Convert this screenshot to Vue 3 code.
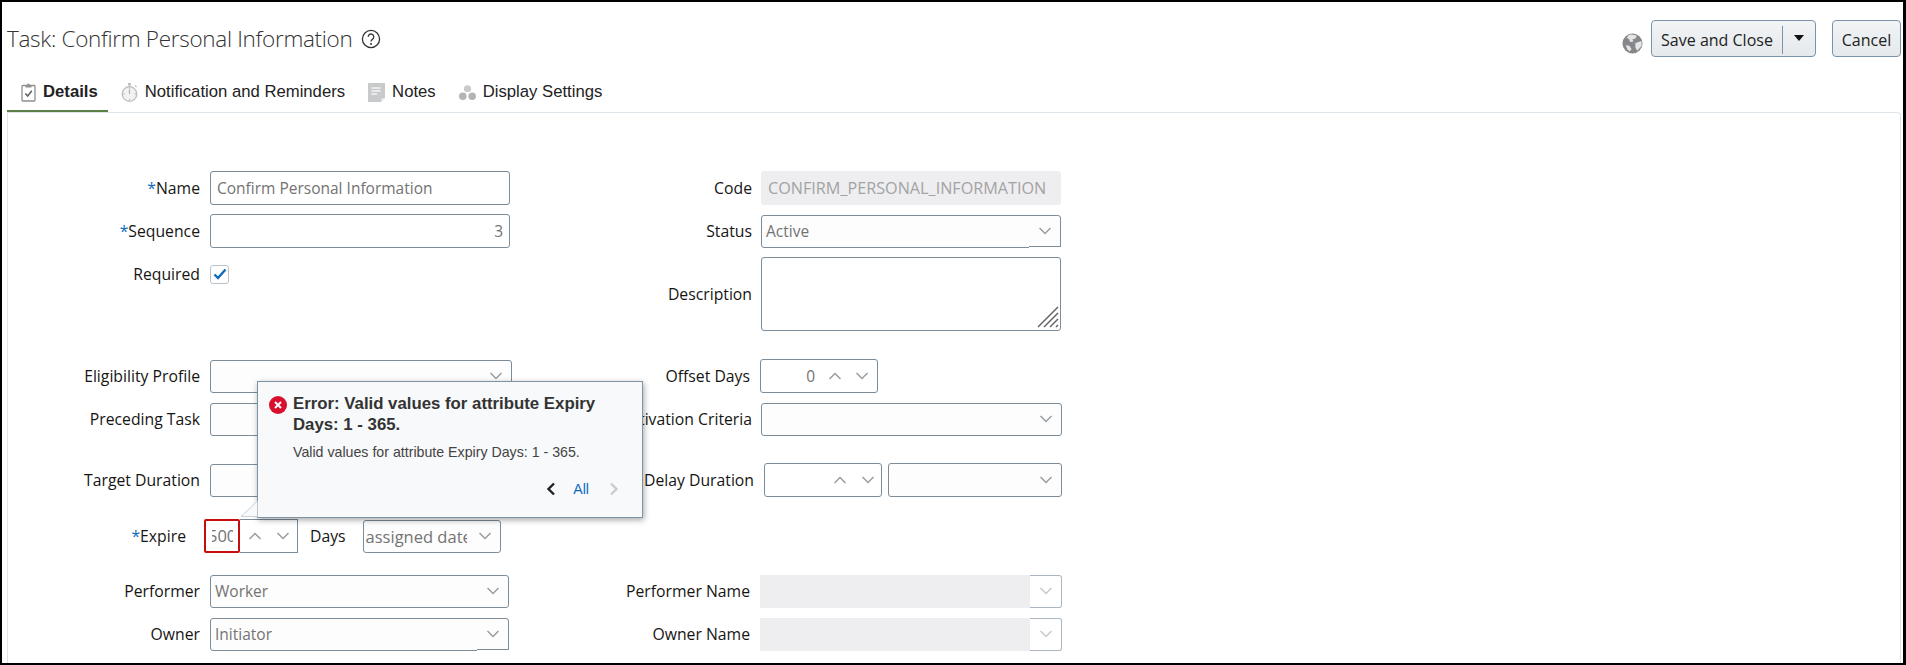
<script setup>
import { ref } from 'vue';

const taskName = ref('Confirm Personal Information');
const sequence = ref('3');
const code = ref('CONFIRM_PERSONAL_INFORMATION');
const required = ref(true);
const tabs = [
  { id: 'details', label: 'Details' },
  { id: 'notify', label: 'Notification and Reminders' },
  { id: 'notes', label: 'Notes' },
  { id: 'display', label: 'Display Settings' },
];
const currentTab = ref('details');
</script>

<template>
  <div class="frame">
    <svg class="defs" aria-hidden="true">
      <symbol id="chev-down" viewBox="0 0 14 8"><path d="M1.5 1 7 6.5 12.5 1" fill="none" stroke="currentColor" stroke-width="1.5" /></symbol>
      <symbol id="chev-up" viewBox="0 0 14 8"><path d="M1.5 7 7 1.5 12.5 7" fill="none" stroke="currentColor" stroke-width="1.5" /></symbol>
    </svg>

    <header class="head">
      <h1 class="title">Task: Confirm Personal Information</h1>
      <svg class="help" viewBox="0 0 20 20">
        <circle cx="10" cy="10" r="8.6" fill="none" stroke="#333" stroke-width="1.3" />
        <path d="M7.2 7.8a2.8 2.8 0 1 1 4.4 2.3c-1 .7-1.6 1.2-1.6 2.5" fill="none" stroke="#333" stroke-width="1.3" />
        <circle cx="10" cy="15" r="1" fill="#333" />
      </svg>
      <div class="actions">
        <svg class="globe" viewBox="0 0 22 22">
          <circle cx="11" cy="11" r="10.5" fill="#85878a" />
          <path d="M7 2 10 1.500 15.500 2.500 14 6 11 6.500 12 9 8.500 9.500 7.500 6.500 5 5Z" fill="#e4e5e5" />
          <path d="M14 10.500 20.500 8.500 20.500 13.500 16 18.500 14 15.500ZM4 12.500 8 13.500 10 17 8 19.500 5.500 17Z" fill="#e4e5e5" />
        </svg>
        <div class="btn split">
          <span class="split-main">Save and Close</span>
          <span class="split-arrow"><svg viewBox="0 0 10 6" width="10" height="6"><path d="M0 0h10L5 6z" fill="#111" /></svg></span>
        </div>
        <div class="btn cancel">Cancel</div>
      </div>
    </header>

    <nav class="tabs">
      <div
        v-for="tab in tabs"
        :key="tab.id"
        class="tab"
        :class="{ selected: currentTab === tab.id }"
        @click="currentTab = tab.id"
      >
        <svg v-if="tab.id === 'details'" class="tab-icon" viewBox="0 0 17 19">
          <rect x="2" y="2.500" width="13" height="15.500" rx="0.800" fill="#fff" stroke="#8f8f8f" stroke-width="1.300" />
          <path d="M5.500 4.500V2.500H7.300V0.700H9.700V2.500H11.500V4.500Z" fill="#8f8f8f" />
          <path d="M5.300 10.500 7.700 13 11.800 7.800" fill="none" stroke="#5f5f5f" stroke-width="1.500" />
        </svg>
        <svg v-else-if="tab.id === 'notify'" class="tab-icon" viewBox="0 0 17 19">
          <rect x="7" y="0" width="3" height="2.500" fill="#bdbdbd" />
          <path d="M14 2.500l1.500 1.500" stroke="#c4c4c4" stroke-width="1.300" />
          <circle cx="8.500" cy="11" r="7.300" fill="#f2f2f2" stroke="#bdbdbd" stroke-width="1.300" />
          <path d="M8.500 6.500V11" stroke="#b0b0b0" stroke-width="1.200" />
          <circle cx="8.500" cy="5" r="0.700" fill="#b0b0b0" />
          <circle cx="8.500" cy="16.800" r="0.700" fill="#b0b0b0" />
          <circle cx="3" cy="11" r="0.700" fill="#b0b0b0" />
          <circle cx="14" cy="11" r="0.700" fill="#b0b0b0" />
        </svg>
        <svg v-else-if="tab.id === 'notes'" class="tab-icon" viewBox="0 0 17 19">
          <path d="M0 0h17v15l-4 4H0z" fill="#c9cacb" />
          <path d="M13.500 19l3.500-3.500h-3.500z" fill="#f1f1f1" />
          <path d="M3.500 5h9M3.500 8h9M3.500 11h5.500" stroke="#f4f4f4" stroke-width="1.300" />
        </svg>
        <svg v-else class="tab-icon" viewBox="0 0 18 18">
          <circle cx="9" cy="5" r="3.800" fill="#c9cacb" />
          <circle cx="4" cy="13" r="4" fill="#b3b4b5" />
          <circle cx="14" cy="13" r="4" fill="#b3b4b5" />
        </svg>
        <span>{{ tab.label }}</span>
      </div>
    </nav>

    <main class="panel">
      <div class="form">
        <section class="col-left">
          <div class="row">
            <label class="lbl"><i>*</i>Name</label>
            <input v-model="taskName" class="field" type="text" />
          </div>
          <div class="row">
            <label class="lbl"><i>*</i>Sequence</label>
            <input v-model="sequence" class="field num" type="text" />
          </div>
          <div class="row">
            <label class="lbl">Required</label>
            <span class="check" :class="{ on: required }" @click="required = !required">
              <svg viewBox="0 0 14 12" width="14" height="12"><path d="M1.500 6.500 5 10l7.500-8.500" fill="none" stroke="#0f6cbd" stroke-width="2.400" /></svg>
            </span>
          </div>
          <div class="row mt68">
            <label class="lbl">Eligibility Profile</label>
            <div class="select wide"><span></span><svg class="chev"><use href="#chev-down" /></svg></div>
          </div>
          <div class="row">
            <label class="lbl">Preceding Task</label>
            <div class="select wide"><span></span><svg class="chev"><use href="#chev-down" /></svg></div>
          </div>
          <div class="row mt27">
            <label class="lbl">Target Duration</label>
            <div class="select wide"><span></span></div>
          </div>
          <div class="row mt22 expire">
            <label class="lbl"><i>*</i>Expire</label>
            <div class="spin">
              <div class="bad"><span>5000</span></div>
              <div class="spin-btns">
                <svg class="chev"><use href="#chev-up" /></svg>
                <svg class="chev"><use href="#chev-down" /></svg>
              </div>
            </div>
            <span class="days">Days</span>
            <div class="select date"><span>assigned date</span><svg class="chev"><use href="#chev-down" /></svg></div>
          </div>
          <div class="row mt21">
            <label class="lbl">Performer</label>
            <div class="select"><span>Worker</span><svg class="chev"><use href="#chev-down" /></svg></div>
          </div>
          <div class="row">
            <label class="lbl">Owner</label>
            <div class="select notch"><span>Initiator</span><svg class="chev"><use href="#chev-down" /></svg></div>
          </div>
        </section>

        <section class="col-right">
          <div class="row">
            <label class="lbl">Code</label>
            <input v-model="code" class="field off" type="text" disabled />
          </div>
          <div class="row">
            <label class="lbl">Status</label>
            <div class="select notch status"><span>Active</span><svg class="chev"><use href="#chev-down" /></svg></div>
          </div>
          <div class="row tall">
            <label class="lbl">Description</label>
            <div class="area">
              <svg class="grip" viewBox="0 0 22 22">
                <path d="M1 21 21 1M7 21 21 7M13 21l8-8M19 21l2-2" stroke="#666" stroke-width="1.500" fill="none" />
              </svg>
            </div>
          </div>
          <div class="row mt28 narrow">
            <label class="lbl">Offset Days</label>
            <div class="spin offset">
              <span class="spin-val">0</span>
              <div class="spin-btns">
                <svg class="chev"><use href="#chev-up" /></svg>
                <svg class="chev"><use href="#chev-down" /></svg>
              </div>
            </div>
          </div>
          <div class="row">
            <label class="lbl">Activation Criteria</label>
            <div class="select long"><span></span><svg class="chev"><use href="#chev-down" /></svg></div>
          </div>
          <div class="row mt27 delay">
            <label class="lbl">Delay Duration</label>
            <div class="spin delay-spin">
              <span class="spin-val"></span>
              <div class="spin-btns">
                <svg class="chev"><use href="#chev-up" /></svg>
                <svg class="chev"><use href="#chev-down" /></svg>
              </div>
            </div>
            <div class="select delay-unit"><span></span><svg class="chev"><use href="#chev-down" /></svg></div>
          </div>
          <div class="row mt77 narrow">
            <label class="lbl">Performer Name</label>
            <div class="lookup"><div class="lookup-val"></div><div class="lookup-btn"><svg class="chev faint"><use href="#chev-down" /></svg></div></div>
          </div>
          <div class="row narrow">
            <label class="lbl">Owner Name</label>
            <div class="lookup"><div class="lookup-val"></div><div class="lookup-btn"><svg class="chev faint"><use href="#chev-down" /></svg></div></div>
          </div>
        </section>
      </div>
    </main>

    <aside class="popup">
      <svg class="pointer" viewBox="0 0 18 18" width="18" height="18">
        <path d="M17.500 1 1 16.500H17.500" fill="#f8f9fa" stroke="#c8d1d8" stroke-width="1" />
      </svg>
      <div class="popup-head">
        <svg class="err" viewBox="0 0 18 18">
          <circle cx="9" cy="9" r="9" fill="#d8102e" />
          <path d="M6 6l6 6M12 6l-6 6" stroke="#fff" stroke-width="2" />
        </svg>
        <strong>Error: Valid values for attribute Expiry Days: 1 - 365.</strong>
      </div>
      <p class="popup-msg">Valid values for attribute Expiry Days: 1 - 365.</p>
      <div class="popup-nav">
        <svg viewBox="0 0 10 14" width="10" height="14"><path d="M8 1.500 2.500 7 8 12.500" fill="none" stroke="#222" stroke-width="2.400" /></svg>
        <a class="all">All</a>
        <svg viewBox="0 0 10 14" width="10" height="14"><path d="M2 1.500 7.500 7 2 12.500" fill="none" stroke="#c9cccf" stroke-width="2.400" /></svg>
      </div>
    </aside>
  </div>
</template>

<style>
html,
body {
  margin: 0;
  background: #fff;
}
</style>

<style scoped>
.frame {
  position: relative;
  box-sizing: border-box;
  width: 1906px;
  height: 665px;
  border: 2px solid #000;
  border-right-width: 3px;
  overflow: hidden;
  display: flex;
  flex-direction: column;
  background: #fff;
  font-family: 'Open Sans', 'Noto Sans', sans-serif;
  font-size: 15.5px;
  color: #161513;
}

.defs {
  position: absolute;
  width: 0;
  height: 0;
}

.head {
  display: flex;
  align-items: center;
  padding: 18px 2px 0 5px;
  height: 37px;
}

.title {
  margin: 0;
  font-size: 22.5px;
  font-weight: 300;
  color: #333;
  letter-spacing: -0.3px;
}

.help {
  width: 20px;
  height: 20px;
  margin-left: 9px;
}

.actions {
  display: flex;
  align-items: center;
  margin-left: auto;
}

.globe {
  width: 21px;
  height: 21px;
  margin: 10px 8px 0 0;
}

.btn {
  box-sizing: border-box;
  height: 37px;
  padding-top: 2px;
  border: 1px solid #7b93a8;
  border-radius: 4px;
  background: linear-gradient(#f2f4f6, #e5e9eb);
  font-size: 16px;
  color: #222;
  display: flex;
  align-items: center;
}

.split {
  width: 165px;
  margin-right: 16px;
}

.split-main {
  width: 130px;
  height: 28px;
  line-height: 28px;
  text-align: center;
  border-right: 1px solid #7b93a8;
  white-space: nowrap;
}

.split-arrow {
  flex: 1;
  display: flex;
  justify-content: center;
  margin-bottom: 4px;
}

.cancel {
  width: 69px;
  justify-content: center;
}

.tabs {
  display: flex;
  margin: 12px 0 0 5px;
  height: 44px;
  font-family: 'Liberation Sans', Arial, sans-serif;
  font-size: 16.7px;
}

.tab {
  display: flex;
  align-items: center;
  gap: 7px;
  padding: 5px 10px 3px 13px;
  color: #222;
  cursor: pointer;
}

.tab.selected {
  font-weight: 700;
  gap: 6px;
  border-bottom: 3px solid #5b7f47;
  padding-bottom: 0;
}

.tab-icon {
  width: 17px;
  height: 19px;
  flex: none;
}

.panel {
  flex: 1;
  margin: -1px 2px 0 5px;
  border: 1px solid #dde4ea;
  border-bottom: 0;
  border-radius: 0 4px 0 0;
}

.form {
  display: flex;
  padding-top: 58px;
}

.col-left {
  width: 502px;
}

.col-right {
  width: 560px;
  margin-left: 10px;
}

.row {
  display: flex;
  align-items: center;
  height: 34px;
  margin-bottom: 9px;
}

.row.tall {
  height: 74px;
}

.mt68 { margin-top: 68px; }
.mt28 { margin-top: 28px; }
.mt27 { margin-top: 27px; }
.mt22 { margin-top: 22px; }
.mt21 { margin-top: 21px; }
.mt77 { margin-top: 77px; }

.row.mt27,
.row.expire {
  margin-bottom: 0;
}

.lbl {
  width: 192px;
  margin-right: 10px;
  font-size: 15.75px;
  text-align: right;
  white-space: nowrap;
  flex: none;
}

.lbl i {
  color: #0f6cbd;
  font-style: normal;
}

.col-right .lbl {
  width: 232px;
  margin-right: 9px;
}

.col-right .narrow .lbl {
  width: 230px;
  margin-right: 10px;
}

.col-right .delay .lbl {
  width: 234px;
  margin-right: 10px;
}

.field {
  box-sizing: border-box;
  width: 300px;
  height: 34px;
  padding: 0 6px;
  border: 1px solid #7b8c9b;
  border-radius: 3px;
  background: #fff;
  color: #737373;
  font: inherit;
  outline: none;
}

.field.num {
  text-align: right;
}

.field.off {
  border-color: #eeeef0;
  background: #eeeef0;
  color: #a3a3a3;
  font-size: 16.2px;
}

.check {
  box-sizing: border-box;
  width: 19px;
  height: 19px;
  border: 1px solid #b9c2ca;
  border-radius: 3px;
  display: flex;
  align-items: center;
  justify-content: center;
}

.check svg {
  visibility: hidden;
}

.check.on svg {
  visibility: visible;
}

.select {
  position: relative;
  box-sizing: border-box;
  flex: none;
  width: 299px;
  height: 33px;
  padding: 0 8px 0 4px;
  border: 1px solid #7b8c9b;
  border-radius: 3px;
  background: #fdfdfd;
  color: #737373;
  display: flex;
  align-items: center;
  justify-content: space-between;
}

.select.status {
  width: 300px;
}

.select.notch {
  border-bottom-right-radius: 0;
}

/* the caret part of these two sits a pixel higher than the text part */
.select.notch::after {
  content: '';
  position: absolute;
  right: -1px;
  bottom: -1px;
  width: 32px;
  height: 1px;
  background: #fff;
  border-top: 1px solid #7b8c9b;
}

.select.wide {
  width: 302px;
}

.select.long {
  width: 301px;
}

.select.date {
  width: 138px;
  margin-left: 17px;
  padding-left: 2px;
  font-size: 16.5px;
}

.select.date span {
  width: 101px;
  overflow: hidden;
  white-space: nowrap;
}

.chev {
  width: 14px;
  height: 8px;
  color: #969da2;
  flex: none;
}

.chev.faint {
  color: #c6cacd;
}

.area {
  position: relative;
  box-sizing: border-box;
  width: 300px;
  height: 74px;
  border: 1px solid #7b8c9b;
  border-radius: 3px;
}

.grip {
  position: absolute;
  right: 1px;
  bottom: 2px;
  width: 22px;
  height: 22px;
}

.expire .lbl {
  width: 178px;
  margin-right: 18px;
}

.spin {
  box-sizing: border-box;
  display: flex;
  align-items: center;
  height: 34px;
  border: 1px solid #7b8c9b;
  border-radius: 3px;
}

.expire .spin {
  width: 94px;
  border: 0;
}

.bad {
  box-sizing: border-box;
  width: 36px;
  height: 34px;
  padding-left: 6px;
  line-height: 30px;
  border: 2px solid #c70d0d;
  border-radius: 2px;
  color: #737373;
  font-size: 16.5px;
  overflow: hidden;
}

.bad span {
  display: block;
  width: 21px;
  text-indent: -4px;
  overflow: hidden;
  white-space: nowrap;
}

.spin-btns {
  display: flex;
  gap: 14px;
  align-items: center;
  padding: 0 6px 0 7px;
}

.expire .spin-btns {
  box-sizing: border-box;
  width: 58px;
  height: 34px;
  border: 1px solid #7b8c9b;
  border-left: 0;
  justify-content: center;
}

.offset {
  width: 118px;
  justify-content: flex-end;
}

.offset .spin-btns {
  gap: 13px;
  padding-right: 8px;
}

.offset .spin-val {
  margin-right: 6px;
}

.spin-val {
  color: #737373;
  margin-right: 3px;
}

.delay-spin {
  width: 118px;
  justify-content: flex-end;
}

.select.delay-unit {
  width: 174px;
  height: 34px;
  margin-left: 6px;
}

.days {
  margin-left: 12px;
  font-size: 15.75px;
}

.lookup {
  display: flex;
  width: 302px;
  height: 33px;
}

.lookup-val {
  width: 270px;
  background: #eeeef0;
}

.lookup-btn {
  box-sizing: border-box;
  flex: 1;
  border: 1px solid #a9b6c1;
  border-left: 0;
  border-radius: 0 3px 3px 0;
  display: flex;
  align-items: center;
  justify-content: center;
}

.popup {
  position: absolute;
  left: 255px;
  top: 379px;
  box-sizing: border-box;
  width: 386px;
  height: 137px;
  padding: 12px 14px 0 11px;
  border: 1px solid #7f93a5;
  background: #f8f9fa;
  box-shadow: 1px 2px 6px rgba(0, 0, 0, 0.35);
  font-family: 'Liberation Sans', Arial, sans-serif;
  color: #333;
}

.pointer {
  position: absolute;
  left: -18px;
  bottom: -1px;
}

.popup-head {
  display: flex;
  gap: 6px;
  font-size: 16.8px;
  line-height: 20.5px;
}

.err {
  width: 18px;
  height: 18px;
  flex: none;
  margin-top: 2px;
}

.popup-msg {
  margin: 9px 0 0 24px;
  font-size: 14.2px;
  line-height: 16px;
  color: #444;
}

.popup-nav {
  display: flex;
  align-items: center;
  justify-content: flex-end;
  margin: 21px 9px 0 0;
  font-size: 14.2px;
}

.all {
  margin: 0 20px 0 17px;
  color: #0f6cbd;
}
</style>
